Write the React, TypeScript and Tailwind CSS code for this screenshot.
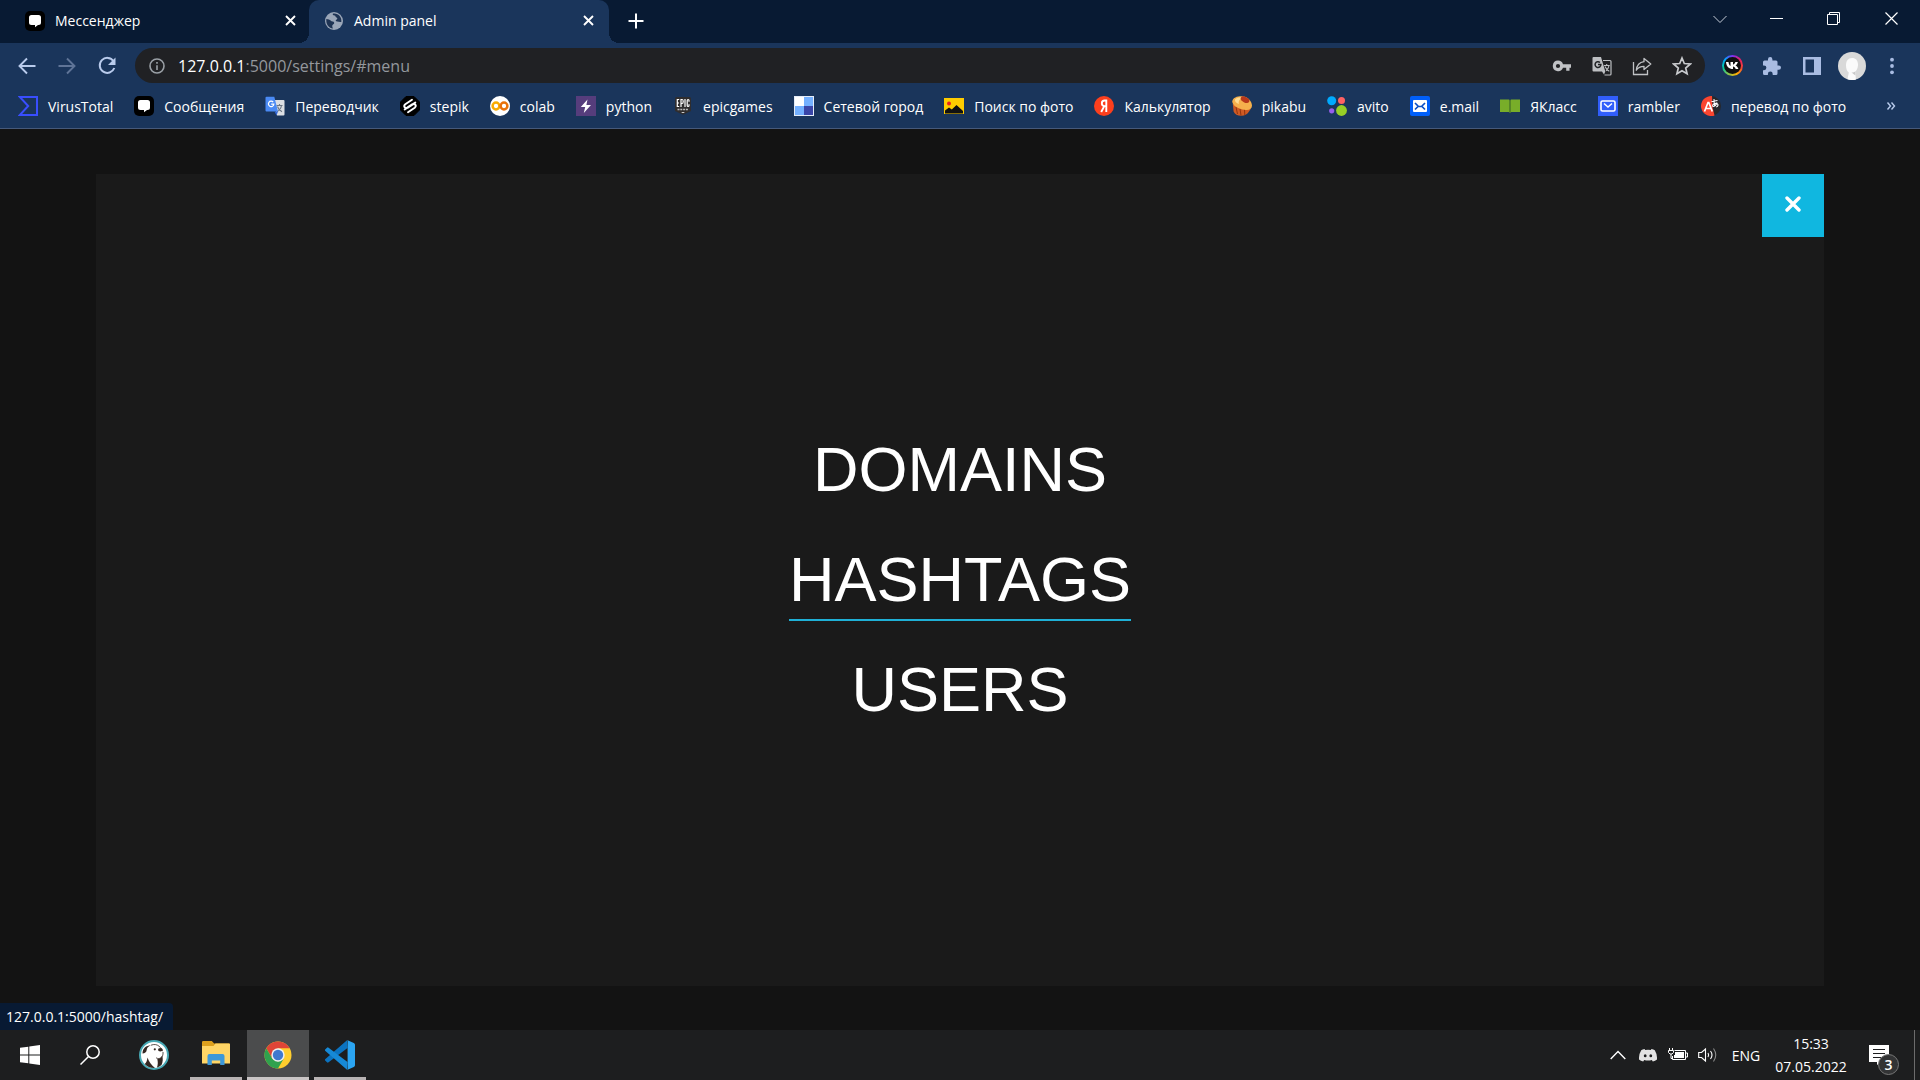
import React from "react";

type Bookmark = { label: string; icon: React.ReactNode };

const ico = "h-5 w-5 shrink-0";

function MessageIcon({ className = ico }: { className?: string }) {
  return (
    <svg className={className} viewBox="0 0 20 20" aria-hidden="true">
      <rect width="20" height="20" rx="5" fill="#000" />
      <path d="M6.500 4h7A2.500 2.500 0 0 1 16 6.500v5a2.500 2.500 0 0 1-2.500 2.500H13l-3 2.300V14H6.500A2.500 2.500 0 0 1 4 11.500v-5A2.500 2.500 0 0 1 6.500 4z" fill="#fff" />
    </svg>
  );
}

const bookmarks: Bookmark[] = [
  {
    label: "VirusTotal",
    icon: (
      <svg className={ico} viewBox="0 0 20 20" aria-hidden="true">
        <path d="M1.800 1H19v18H1.800l8.400-9z" fill="none" stroke="#394eff" strokeWidth="2" />
      </svg>
    ),
  },
  { label: "Сообщения", icon: <MessageIcon /> },
  {
    label: "Переводчик",
    icon: (
      <svg className={ico} viewBox="0 0 20 20" aria-hidden="true">
        <path d="M8 4h10.500a1 1 0 0 1 1 1v13.500a1 1 0 0 1-1 1H12z" fill="#dcdfe4" />
        <path d="M11.500 9.500h6M14.500 8v1.500M16.500 9.500c-.5 3-2.300 5-4.500 6.200M12.500 10.500c.8 2.500 2.500 4.200 4.500 5.200" fill="none" stroke="#6b7684" strokeWidth="1.100" />
        <path d="M1.500.8h7.800L13 15.500H1.500a1 1 0 0 1-1-1V1.800a1 1 0 0 1 1-1z" fill="#4a8af4" />
        <path d="M9.500 15.500H13L11.500 19.500z" fill="#3367d6" />
        <path d="M8.200 6.200A2.700 2.700 0 1 0 8.800 8.200H6.200" fill="none" stroke="#fff" strokeWidth="1.200" />
      </svg>
    ),
  },
  {
    label: "stepik",
    icon: (
      <svg className={ico} viewBox="0 0 20 20" aria-hidden="true">
        <path d="M6 .5h8L19.500 6v8L14 19.500H6L.5 14V6z" fill="#000" stroke="#000" strokeLinejoin="round" />
        <path d="M12 3.800 5.300 8.300c-2.300 1.900-.3 4.500 1.900 3.200l5-3.300M8 16.200l6.700-4.500c2.300-1.900.3-4.500-1.900-3.200l-5 3.300M15.300 6.500 13 8M4.700 13.500 7 12" fill="none" stroke="#fff" strokeWidth="1.900" strokeLinecap="round" />
      </svg>
    ),
  },
  {
    label: "colab",
    icon: (
      <svg className={ico} viewBox="0 0 20 20" aria-hidden="true">
        <circle cx="10" cy="10" r="10" fill="#fff" />
        <circle cx="6" cy="10" r="3.400" fill="none" stroke="#f9ab00" strokeWidth="2.500" />
        <circle cx="14" cy="10" r="3.400" fill="none" stroke="#e8710a" strokeWidth="2.500" />
      </svg>
    ),
  },
  {
    label: "python",
    icon: (
      <svg className={ico} viewBox="0 0 20 20" aria-hidden="true">
        <path d="M0 0h20v20H0z" fill="#563d7c" />
        <path d="M11.500 3.500 4.800 11h4.400l-1.400 6 7.200-8h-4.600z" fill="#fff" />
      </svg>
    ),
  },
  {
    label: "epicgames",
    icon: (
      <svg className={ico} viewBox="0 0 20 20" aria-hidden="true">
        <path d="M3.500 1h13a1.500 1.500 0 0 1 1.500 1.500V15l-8 3.800L2 15V2.500A1.500 1.500 0 0 1 3.500 1z" fill="#2f2d2e" />
        <path d="M6.200 3.500H4.300v7h1.900M4.300 7h1.700M8 11V3.500h1.200q1 0 1 2t-1 2H8M12 3v8M16 5.800V4.500q0-1-.9-1t-.9 1V9.500q0 1 .9 1t.9-1V8.300" fill="none" stroke="#fff" strokeWidth="1.200" />
        <path d="M4.500 13.500h11" stroke="#bbb" strokeWidth="1.600" strokeDasharray="2 .8" />
        <path d="M8 16h4l-2 1z" fill="#fff" />
      </svg>
    ),
  },
  {
    label: "Сетевой город",
    icon: (
      <svg className={ico} viewBox="0 0 20 20" aria-hidden="true">
        <path d="M0 0h20v20H0z" fill="#e4ecf8" />
        <path d="M1 1h9v9H1z" fill="#fff" />
        <path d="M10 1h9v9h-9zM1 10h9v9H1z" fill="#74b0ff" />
        <path d="M10 10h9v9h-9z" fill="#3a45a8" />
      </svg>
    ),
  },
  {
    label: "Поиск по фото",
    icon: (
      <svg className={ico} viewBox="0 0 20 20" aria-hidden="true">
        <path d="M0 2h20v16H0z" fill="#fc0" />
        <circle cx="5" cy="7.500" r="2" fill="#e8211d" />
        <path d="M1 17.500v-3l4-3 2.800 2L12.500 9l6.500 6v2.500z" fill="#111" />
      </svg>
    ),
  },
  {
    label: "Калькулятор",
    icon: (
      <svg className={ico} viewBox="0 0 20 20" aria-hidden="true">
        <circle cx="10" cy="10" r="10" fill="#fc3f1d" />
        <path d="M12.300 16V4.500h-1.600c-3.800 0-3.800 5.600 0 5.600h1.600M10.300 10.100 7.200 16" fill="none" stroke="#fff" strokeWidth="1.900" />
      </svg>
    ),
  },
  {
    label: "pikabu",
    icon: (
      <svg className={ico} viewBox="0 0 20 20" aria-hidden="true">
        <path d="m.8 8 .8 7.500c1 3 4.500 4.500 8 4.300 3.400-.2 6-1.800 7.400-4.300l2-3z" fill="#cf5a24" />
        <path d="m4 11 1.500 7M8 13l1 6.500M12.500 13.500l.3 5.500" stroke="#93350f" strokeWidth="1" />
        <path d="M.2 5.500C.8 1.500 5 .2 9.500.2c6 0 10.500 5 10.500 9.300 0 3.500-3 5-7.500 4.300C7 13 .5 10 .2 5.500z" fill="#f6b04c" />
        <path d="M3 3.500c2-2 5-2.300 7-1.500-2 1-4 3-3 6-2.500-.8-4.500-2.500-4-4.500z" fill="#ffdc94" />
        <ellipse cx="13" cy="3.700" rx="4.600" ry="2.800" transform="rotate(25 13 3.700)" fill="#b8381b" />
      </svg>
    ),
  },
  {
    label: "avito",
    icon: (
      <svg className={ico} viewBox="0 0 20 20" aria-hidden="true">
        <circle cx="4.700" cy="4.700" r="4.500" fill="#0af" />
        <circle cx="14.500" cy="4.500" r="3.500" fill="#ff6163" />
        <circle cx="4.700" cy="14.800" r="2.600" fill="#965eeb" />
        <circle cx="14.500" cy="14.500" r="5.400" fill="#97cf26" />
      </svg>
    ),
  },
  {
    label: "e.mail",
    icon: (
      <svg className={ico} viewBox="0 0 20 20" aria-hidden="true">
        <rect width="20" height="20" rx="2" fill="#005ff9" />
        <rect x="3" y="4" width="14" height="12" rx="1" fill="#fff" />
        <path d="m5 7 3.500 3.500h3L15 7M5 13.500l3-3M15 13.500l-3-3" fill="none" stroke="#0b4fc4" strokeWidth="1.700" />
      </svg>
    ),
  },
  {
    label: "ЯКласс",
    icon: (
      <svg className={ico} viewBox="0 0 20 20" aria-hidden="true">
        <path d="M0 3.500h9l1 1 1-1h9V16h-9l-1 1-1-1H0z" fill="#78ad29" />
        <path d="M10 4v13" stroke="#3f6a28" strokeWidth="1.200" />
      </svg>
    ),
  },
  {
    label: "rambler",
    icon: (
      <svg className={ico} viewBox="0 0 20 20" aria-hidden="true">
        <path d="M0 0h20v20H0z" fill="#315efb" />
        <rect x="3" y="5" width="14" height="10" rx="1.500" fill="none" stroke="#fff" strokeWidth="1.600" />
        <path d="m6 7.500 4 3.500 4-3.500" fill="none" stroke="#fff" strokeWidth="1.500" />
      </svg>
    ),
  },
  {
    label: "перевод по фото",
    icon: (
      <svg className={ico} viewBox="0 0 20 20" aria-hidden="true">
        <circle cx="10" cy="10" r="10" fill="#26282c" />
        <path d="M11 .1A10 10 0 1 0 13.500 19.400L11.500 11z" fill="#fa4530" />
        <path d="M3.500 15.500 7 6.500h.8l3.500 9M4.800 12.500h5" fill="none" stroke="#fff" strokeWidth="1.700" />
        <path d="m10.500 5.500 6-1M13 3c0 3 0 5 .8 7.500M16 6.500c-.8 2.600-2.300 4-4 4-1.500-2 2-3.800 4.200-2.800 1.400.8 1 2.700-1 3.300" fill="none" stroke="#fff" strokeWidth="1.100" />
      </svg>
    ),
  },
];

function TabClose({ title }: { title: string }) {
  return (
    <button type="button" aria-label={`Закрыть ${title}`} className="flex h-5 w-5 items-center justify-center">
      <svg className="h-[11px] w-[11px]" viewBox="0 0 11 11" aria-hidden="true">
        <path d="m1 1 9 9M10 1l-9 9" stroke="#fff" strokeWidth="1.900" />
      </svg>
    </button>
  );
}

function TabStrip() {
  return (
    <div className="flex h-[43px] items-stretch bg-[#081a33] text-[14px]">
      <div className="flex w-[309px] items-center gap-2.5 pr-[9px] pb-0.5 pl-[25px]">
        <MessageIcon />
        <span className="flex-1">Мессенджер</span>
        <TabClose title="Мессенджер" />
      </div>
      <div className="relative flex w-[300px] items-center gap-2.5 rounded-t-[10px] bg-[#1a355b] pr-[11px] pb-0.5 pl-[15px]">
        <span className="absolute bottom-0 -left-2.5 h-2.5 w-2.5 bg-[radial-gradient(circle_at_top_left,transparent_10px,#1a355b_10px)]" />
        <span className="absolute -right-2.5 bottom-0 h-2.5 w-2.5 bg-[radial-gradient(circle_at_top_right,transparent_10px,#1a355b_10px)]" />
        <svg className={ico} viewBox="0 0 20 20" aria-hidden="true">
          <circle cx="10" cy="10" r="9" fill="#9aa6b8" />
          <path d="M2.300 8c2 .2 3.500.6 4.300 1.600 1 1.300 3.300.6 3.600 2.200.3 1.500-2 1.700-2 3.300 0 1 .4 1.700.8 2.300C5 17 2.500 14 2.300 10zM9 2.600c-.8 1.200.3 2 1.500 2 1.500 0 .6 1.700 2 2 1.200.4 1 2-.2 2.200-1.200.4-.4 1.800.8 1.800 1.400-.1 2.600.8 4.200.4.500-3-1-6.500-4-7.800-1.500-.8-3-.9-4.300-.6z" fill="#1f3454" />
        </svg>
        <span className="flex-1">Admin panel</span>
        <TabClose title="Admin panel" />
      </div>
      <button type="button" aria-label="Новая вкладка" className="ml-[11px] flex w-8 items-center justify-center pb-0.5">
        <svg className="h-4 w-4" viewBox="0 0 16 16" aria-hidden="true">
          <path d="M8 .5v15M.5 8h15" stroke="#fff" strokeWidth="2" />
        </svg>
      </button>
      <div className="ml-auto flex h-[37px]">
        <button type="button" aria-label="Поиск вкладок" className="flex w-[57px] items-center justify-center">
          <svg className="h-3.5 w-3.5" viewBox="0 0 14 14" fill="none" stroke="#c5ccd8" aria-hidden="true">
            <path d="m.5 4 6.500 6.500L13.500 4" />
          </svg>
        </button>
        <button type="button" aria-label="Свернуть" className="flex w-[57px] items-center justify-center">
          <span className="h-px w-[13px] bg-white" />
        </button>
        <button type="button" aria-label="Развернуть" className="flex w-[57px] items-center justify-center">
          <svg className="h-[13px] w-[13px]" viewBox="0 0 13 13" fill="none" stroke="#fff" aria-hidden="true">
            <path d="M.5 2.500h10v10H.500zM2.500 2.500v-2h10v10h-2" />
          </svg>
        </button>
        <button type="button" aria-label="Закрыть" className="flex w-[58px] items-center justify-center">
          <svg className="h-[13px] w-[13px]" viewBox="0 0 13 13" stroke="#fff" strokeWidth="1.200" aria-hidden="true">
            <path d="m.5.5 12 12M12.500.5l-12 12" />
          </svg>
        </button>
      </div>
    </div>
  );
}

function IconButton({ label, children }: { label: string; children: React.ReactNode }) {
  return (
    <button type="button" aria-label={label} className="flex h-8 w-10 shrink-0 items-center justify-center">
      {children}
    </button>
  );
}

function Toolbar() {
  return (
    <div className="flex h-[45px] items-center bg-[#1a355b] pr-2 pl-[7px]">
      <IconButton label="Назад">
        <svg className={ico} viewBox="0 0 20 20" fill="none" stroke="#b9cbec" strokeWidth="1.900" aria-hidden="true">
          <path d="M18.500 10H2.500M10 2.500 2.500 10l7.500 7.500" />
        </svg>
      </IconButton>
      <IconButton label="Вперёд">
        <svg className={ico} viewBox="0 0 20 20" fill="none" stroke="#5f7497" strokeWidth="1.900" aria-hidden="true">
          <path d="M1.500 10h16M10 2.500l7.500 7.500-7.500 7.500" />
        </svg>
      </IconButton>
      <IconButton label="Обновить">
        <svg className={ico} viewBox="0 0 20 20" fill="none" aria-hidden="true">
          <path d="M16.500 5.200A7.500 7.500 0 1 0 17.300 12" stroke="#b9cbec" strokeWidth="2" />
          <path d="M18.500 1.500V9H11z" fill="#b9cbec" />
        </svg>
      </IconButton>
      <form className="ml-2 flex h-[35px] min-w-0 flex-1 items-center rounded-full bg-[#202124] pr-[3px] pl-3.5 text-[16px]" onSubmit={(e) => e.preventDefault()}>
        <svg className="h-4 w-4 shrink-0" viewBox="0 0 16 16" fill="none" stroke="#9aa0a6" strokeWidth="1.600" aria-hidden="true">
          <circle cx="8" cy="8" r="7" />
          <path d="M8 7.200V12M8 4v1.700" />
        </svg>
        <label htmlFor="address" className="ml-[13px] text-white">127.0.0.1</label>
        <input id="address" type="text" defaultValue=":5000/settings/#menu" className="min-w-0 flex-1 bg-transparent text-[#94989d] outline-none" />
        <IconButton label="Пароли">
          <svg className={ico} viewBox="0 0 20 20" aria-hidden="true">
            <path fillRule="evenodd" d="M6 4.500a5.300 5.300 0 0 1 5 3.700h8v3.600h-1.500v3h-3.300v-3H11A5.300 5.300 0 1 1 6 4.500zm0 3.400a2.100 2.100 0 1 0 0 4.200 2.100 2.100 0 0 0 0-4.200z" fill="#c0c2c5" />
          </svg>
        </IconButton>
        <IconButton label="Перевести">
          <svg className={ico} viewBox="0 0 20 20" aria-hidden="true">
            <path d="M11 4.500h7a1 1 0 0 1 1 1V18a1 1 0 0 1-1 1h-5.500" fill="none" stroke="#bdbfc2" strokeWidth="1.200" />
            <path d="M1.500 1H9l4.300 14.500H1.500a1 1 0 0 1-1-1V2a1 1 0 0 1 1-1zM10 15.500h3.300L12 18.500z" fill="#bdbfc2" />
            <path d="M8 6.500A2.900 2.900 0 1 0 8.900 8.600H6" fill="none" stroke="#202124" strokeWidth="1.500" />
            <path d="M12 9.500h5.700M14.700 8v1.500M17 9.500c-.4 2.500-1.500 4-3 5.200M13 10.500c.8 2 2 3.600 4.300 4.700" fill="none" stroke="#bdbfc2" strokeWidth="1.100" />
          </svg>
        </IconButton>
        <IconButton label="Поделиться">
          <svg className={ico} viewBox="0 0 20 20" fill="none" stroke="#c0c2c5" strokeWidth="1.300" aria-hidden="true">
            <path d="M1.500 6v12.500h14V14" />
            <path d="M12 2.500 18.800 8 12 13.500v-3.200c-3.500 0-6 1-7.700 4C4.800 9.500 7.500 6.300 12 5.700z" strokeLinejoin="round" />
          </svg>
        </IconButton>
        <IconButton label="Добавить в закладки">
          <svg className={ico} viewBox="0 0 20 20" fill="none" stroke="#c8cacd" strokeWidth="1.700" aria-hidden="true">
            <path d="m10 2 2.300 5.500 6 .5-4.600 4 1.400 5.800L10 14.700l-5.100 3.100L6.300 12 1.700 8l6-.5z" />
          </svg>
        </IconButton>
      </form>
      <div className="ml-[7px] flex items-center">
        <IconButton label="VK">
          <span className="flex h-[21px] w-[21px] items-center justify-center rounded-full bg-[conic-gradient(#7b2ff7,#e91e63,#f44336,#ffb300,#8bc34a,#00c8a0,#00a8ff,#7b2ff7)]">
            <svg className="h-[17px] w-[17px]" viewBox="0 0 17 17" aria-hidden="true">
              <circle cx="8.500" cy="8.500" r="8.500" fill="#111" />
              <path d="M2 5h2.500c.2 2.200 1 3.500 2 3.900V5H9v2.700c1-.3 1.900-1.300 2.400-2.700h2.500c-.4 1.600-1.300 2.800-2.400 3.500 1.300.6 2.300 1.700 2.900 3.500h-2.700C11.200 10.700 10.200 9.800 9 9.600V12C5 12 2.300 9.500 2 5z" fill="#fff" />
            </svg>
          </span>
        </IconButton>
        <IconButton label="Расширения">
          <svg className={ico} viewBox="0 0 20 20" aria-hidden="true">
            <path d="M8.200 1a2.200 2.200 0 0 1 2.200 2.200V4.500H14A1.500 1.500 0 0 1 15.500 6v3.400h1.300a2.200 2.200 0 0 1 0 4.400h-1.300v3.700A1.500 1.500 0 0 1 14 19h-3.300v-1a2.400 2.400 0 0 0-4.800 0v1H2.500A1.500 1.500 0 0 1 1 17.500v-3.300h1a2.400 2.400 0 0 0 0-4.800H1V6a1.500 1.500 0 0 1 1.500-1.500H6V3.200A2.200 2.200 0 0 1 8.200 1z" fill="#a9bce2" />
          </svg>
        </IconButton>
        <IconButton label="Боковая панель">
          <svg className="h-[18px] w-[18px]" viewBox="0 0 18 18" aria-hidden="true">
            <path fillRule="evenodd" d="M0 0h18v18H0zM2.500 2.500v13h8.500v-13z" fill="#a9bce2" />
          </svg>
        </IconButton>
        <IconButton label="Профиль">
          <svg className="h-7 w-7" viewBox="0 0 28 28" aria-hidden="true">
            <circle cx="14" cy="14" r="14" fill="#d9d9d9" />
            <path d="M14 6c4 0 6.300 3 6 7.300-.2 3-1.200 5-2.700 6.300l.6 8.200c-3 .5-6 .3-8.400-.6l1.300-6.600C8.700 19 8 16.500 8 13.300 8 9 10 6 14 6z" fill="#fbfbfb" />
            <path d="M17.300 19.600c-1.400.9-2.700 1.100-3.800.8l3.900 3z" fill="#c9c9c9" />
          </svg>
        </IconButton>
        <IconButton label="Меню">
          <svg className={ico} viewBox="0 0 20 20" fill="#a9bce2" aria-hidden="true">
            <circle cx="10" cy="3.700" r="1.900" />
            <circle cx="10" cy="10" r="1.900" />
            <circle cx="10" cy="16.300" r="1.900" />
          </svg>
        </IconButton>
      </div>
    </div>
  );
}

function BookmarksBar() {
  return (
    <nav aria-label="Закладки" className="flex h-[41px] items-center justify-between border-b border-[#46597a] bg-[#1a355b] pr-6 pb-1 pl-[18px] text-[14px]">
      <ul className="flex gap-[21px]">
        {bookmarks.map((b) => (
          <li key={b.label}>
            <a href="#bookmark" className="flex items-center gap-2.5 whitespace-nowrap">
              {b.icon}
              {b.label}
            </a>
          </li>
        ))}
      </ul>
      <button type="button" aria-label="Другие закладки">
        <svg className="h-2.5 w-2.5" viewBox="0 0 10 10" fill="none" stroke="#b9cbec" strokeWidth="1.400" aria-hidden="true">
          <path d="m1.500 1.500 3 3.500-3 3.500M5.500 1.500l3 3.500-3 3.500" />
        </svg>
      </button>
    </nav>
  );
}

function AdminMenu() {
  const items = ["DOMAINS", "HASHTAGS", "USERS"];
  return (
    <main className="relative flex flex-1 bg-[#131313] px-[5%] pt-[45px] pb-11 font-['Liberation_Sans',Arial,sans-serif]">
      <section id="menu" className="relative flex flex-1 items-center justify-center bg-[#1a1a1a]">
        <nav aria-label="Admin panel" className="flex flex-col items-center gap-8 pt-1 text-[63px] leading-[72px] text-white">
          {items.map((item) => (
            <a
              key={item}
              href={`#${item.toLowerCase()}`}
              className={item === "HASHTAGS" ? "border-b-2 border-[#1fb0d6] pb-1" : "border-b-2 border-transparent pb-1"}
            >
              {item}
            </a>
          ))}
        </nav>
        <button type="button" aria-label="Close menu" className="absolute top-0 right-0 flex h-[63px] w-[62px] items-center justify-center bg-[#10b7e0] pb-1">
          <svg className="h-4 w-4" viewBox="0 0 16 16" aria-hidden="true">
            <path d="m2 2 12 12M14 2 2 14" stroke="#fff" strokeWidth="3.400" strokeLinecap="round" />
          </svg>
        </button>
      </section>
      <div role="status" className="absolute bottom-0 left-0 flex h-[27px] items-center rounded-tr-[4px] bg-[#081a33] pr-2.5 pl-1.5 font-['Open_Sans',sans-serif] text-[14px] text-white">
        127.0.0.1:5000/hashtag/
      </div>
    </main>
  );
}

function Taskbar() {
  return (
    <footer className="flex h-[50px] items-stretch justify-between bg-[#1d1e1f] text-white">
      <div className="flex">
        <button type="button" aria-label="Пуск" className="flex w-[60px] items-center justify-center">
          <svg className={ico} viewBox="0 0 20 20" fill="#fff" aria-hidden="true">
            <path d="M0 2.800 8.300 1.700v7.800H0zM9.300 1.500 20 0v9.500H9.300zM0 10.500h8.300v7.800L0 17.200zM9.300 10.500H20V20L9.300 18.500z" />
          </svg>
        </button>
        <button type="button" aria-label="Поиск" className="mr-[3px] flex w-[60px] items-center justify-center">
          <svg className={ico} viewBox="0 0 20 20" fill="none" stroke="#fff" strokeWidth="1.500" aria-hidden="true">
            <circle cx="13" cy="7" r="6.200" />
            <path d="M8.500 11.500.5 19.500" />
          </svg>
        </button>
        <button type="button" aria-label="DBeaver" className="flex w-[62px] items-center justify-center">
          <svg className="h-[30px] w-[30px]" viewBox="0 0 30 30" aria-hidden="true">
            <circle cx="15" cy="15" r="14" fill="#fff" stroke="#48a9b5" strokeWidth="2" />
            <path d="M3.500 13.500C3.500 8.500 7 5.500 12 5.300c-3 1.200-4 2.500-4.300 4.700C7.500 12 5.800 13.500 3.500 13.500z" fill="#342722" />
            <path d="M12 5.200c3-1.200 6-.8 8 1 2 1.800 3.300 3 3.500 5" fill="none" stroke="#342722" strokeWidth=".8" />
            <ellipse cx="21.300" cy="9.800" rx="2.300" ry="1.700" fill="#342722" />
            <circle cx="15.800" cy="9.300" r="1.100" fill="#342722" />
            <path d="M24 12c.3 3-.5 5-3 6.300-1.500.5-3 .2-4-.6" fill="none" stroke="#342722" strokeWidth=".8" />
            <path d="M18.300 19c2.500.2 4-1.200 4.900-3.500.9 3 .8 6.500-.7 9.500-1.500 1.300-2.700 2-4.500 2.500 1-3 1-5.500.3-8.500zM8.500 17.500c1.300 4.300 4 7.800 7.500 10.500-4 .3-7.700-1.200-10.300-4C7.500 22.500 8.200 20 8.500 17.500z" fill="#342722" />
          </svg>
        </button>
        <button type="button" aria-label="Проводник" className="relative flex w-[62px] items-center justify-center pb-1">
          <svg className="h-6 w-7" viewBox="0 0 28 24" aria-hidden="true">
            <path d="M0 1.200A1.200 1.200 0 0 1 1.200 0h8.600l2.400 2.500H26.800A1.200 1.200 0 0 1 28 3.700V9H0z" fill="#dda01d" />
            <path d="M0 5h11.500l2-2.500H27a1 1 0 0 1 1 1V22.500H0z" fill="#ffd565" />
            <path d="M5.500 24v-9a2 2 0 0 1 2-2h13a2 2 0 0 1 2 2v9h-4.300v-4.500H9.800V24z" fill="#3d98d9" />
          </svg>
          <span className="absolute inset-x-[5px] bottom-0 h-[3px] bg-[#b8b3b3]" />
        </button>
        <button type="button" aria-label="Google Chrome" className="relative flex w-[62px] items-center justify-center bg-[#4b4c4d]">
          <svg className="h-7 w-7" viewBox="0 0 28 28" aria-hidden="true">
            <circle cx="14" cy="14" r="13.500" fill="#ffce2e" />
            <path d="M2.300 7.250A13.500 13.500 0 0 1 25.700 7.250H14L8.200 17.400z" fill="#de4537" />
            <path d="M2.300 7.250A13.500 13.500 0 0 0 14 27.500l5.900-10.200L14 20.500 8.200 17.400z" fill="#2fa24e" />
            <circle cx="14" cy="14" r="6.700" fill="#eef0f0" />
            <circle cx="14" cy="14" r="5.200" fill="#3f79cf" />
          </svg>
          <span className="absolute inset-x-0 bottom-0 h-[3px] bg-[#c9c5c5]" />
        </button>
        <button type="button" aria-label="Visual Studio Code" className="relative flex w-[62px] items-center justify-center">
          <svg className="h-[30px] w-[30px]" viewBox="0 0 30 30" aria-hidden="true">
            <path d="M22 .2 22.500 8 3.600 22.300a1.200 1.200 0 0 1-1.600 0L.4 20.800a1.200 1.200 0 0 1 0-1.800z" fill="#0b73c0" />
            <path d="m22 29.800.5-7.800L3.600 7.700a1.200 1.200 0 0 0-1.600 0L.4 9.200a1.200 1.200 0 0 0 0 1.800z" fill="#1689d6" />
            <path d="M22 .1 28.800 3A2 2 0 0 1 30 4.900v20.200a2 2 0 0 1-1.200 1.900L22 29.900c.4-.2.600-.6.600-1V1.100c0-.4-.2-.8-.6-1z" fill="#2ba5f2" />
          </svg>
          <span className="absolute inset-x-[5px] bottom-0 h-[3px] bg-[#b8b3b3]" />
        </button>
      </div>
      <div className="flex items-center text-[14px]">
        <button type="button" aria-label="Скрытые значки" className="flex w-[30px] justify-center">
          <svg className="h-4 w-4" viewBox="0 0 16 16" fill="none" stroke="#fff" strokeWidth="1.400" aria-hidden="true">
            <path d="m.7 12 7.300-7.500L15.300 12" />
          </svg>
        </button>
        <button type="button" aria-label="Discord" className="flex w-[30px] justify-center">
          <svg className="h-[18px] w-[18px]" viewBox="0 0 18 18" aria-hidden="true">
            <path d="M5.500 3 6.200 4q2.800-.5 5.600 0l.7-1q2 .3 3.300 1.300Q18.300 8.500 18 13.500q-1.800 1.400-4.200 2l-1-1.500q-3.800 1-7.600 0l-1 1.500Q1.800 14.900 0 13.500-.3 8.500 2.200 4.300 3.500 3.300 5.500 3z" fill="#e3e3e3" />
            <path d="M4.800 9.700a1.400 1.500 0 1 0 2.800 0 1.400 1.500 0 1 0-2.800 0zM10.400 9.700a1.400 1.500 0 1 0 2.800 0 1.400 1.500 0 1 0-2.800 0z" fill="#1d1e1f" />
          </svg>
        </button>
        <button type="button" aria-label="Батарея" className="flex w-[30px] justify-center">
          <svg className="h-4 w-5" viewBox="0 0 20 16" fill="none" stroke="#fff" aria-hidden="true">
            <path d="M6.500 3.500h11v9h-13V9M18 6h1.500v4H18" />
            <path d="M7 5h9v6H6V8h1z" fill="#fff" stroke="none" />
            <path d="M1.500 1v2M4.500 1v2M.5 3.500h5v2L4 7H2L.500 5.500zM3 7v4.500H4.500" />
          </svg>
        </button>
        <button type="button" aria-label="Громкость" className="flex w-[30px] justify-center">
          <svg className="h-5 w-5" viewBox="0 0 20 20" fill="none" stroke="#fff" strokeWidth="1.100" aria-hidden="true">
            <path d="M.7 7.500h2.800L7.500 4v12l-4-3.500H.7z" />
            <path d="M10 8q1.300 2 0 4M12.500 6q3 4 0 8" />
            <path d="M15.500 3.500q4.500 6.500 0 13" stroke="#8b8b8b" />
          </svg>
        </button>
        <button type="button" className="w-[46px]">ENG</button>
        <div className="w-[84px] text-center leading-[23px]">
          <time dateTime="2022-05-07T15:33" className="block">15:33</time>
          <time dateTime="2022-05-07" className="block">07.05.2022</time>
        </div>
        <button type="button" aria-label="Уведомления: 3" className="relative ml-4 flex h-full w-[45px] items-center">
          <svg className="h-5 w-5" viewBox="0 0 20 20" aria-hidden="true">
            <path d="M0 0h20v17h-8l-4 3v-3H0z" fill="#fff" />
            <path d="M4 4.500h12M4 8.500h12M4 12.500h8" stroke="#1d1e1f" strokeWidth="1.200" />
          </svg>
          <span className="absolute top-6 left-[9px] flex h-[21px] w-[21px] items-center justify-center rounded-full border border-[#777] bg-[#333435] text-[14px] font-semibold">3</span>
        </button>
        <span className="mr-[5px] h-full w-px bg-[#6c6c6c]" />
      </div>
    </footer>
  );
}

export default function App() {
  return (
    <div className="flex min-h-screen flex-col bg-[#131313] font-['Open_Sans','Noto_Sans',sans-serif] text-white">
      <header>
        <TabStrip />
        <Toolbar />
        <BookmarksBar />
      </header>
      <AdminMenu />
      <Taskbar />
    </div>
  );
}
